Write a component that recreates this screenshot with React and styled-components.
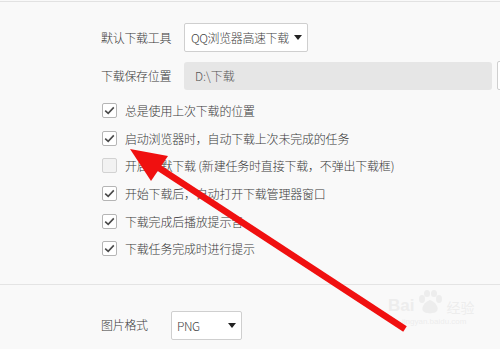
import React from 'react'
import styled, { createGlobalStyle } from 'styled-components'

const GlobalStyle = createGlobalStyle`
  html, body {
    margin: 0;
    padding: 0;
    background: #f9f9f9;
  }
  body {
    font-family: "Noto Sans CJK SC", "Microsoft YaHei", sans-serif;
    font-size: 12px;
    font-weight: 300;
    color: #333;
  }
`

const Page = styled.div`
  position: relative;
  width: 500px;
  height: 349px;
  overflow: hidden;
  border-top: 1px solid #e2e2e2;
  margin-top: 1px;
  box-sizing: border-box;
`

const Section = styled.div`
  padding: 21px 0 0 101px;
`

const FieldRow = styled.div`
  display: flex;
  align-items: center;
  height: 29px;
  margin-bottom: ${p => p.$gap || 0}px;
`

const Label = styled.span`
  width: ${p => p.$width}px;
  flex-shrink: 0;
  line-height: 1;
  color: #3a3a3a;
  letter-spacing: -0.3px;
`

const Select = styled.div`
  display: flex;
  align-items: center;
  justify-content: space-between;
  box-sizing: border-box;
  flex-shrink: 0;
  width: ${p => p.$width}px;
  height: 29px;
  padding: 0 5px 0 ${p => p.$pad}px;
  background: #fff;
  border: 1px solid #cfcfcf;
  border-radius: 2px;
  color: #444;
  letter-spacing: -0.4px;
`

const Caret = styled.span`
  width: 0;
  height: 0;
  border-left: 4px solid transparent;
  border-right: 4px solid transparent;
  border-top: 5px solid #222;
`

const PathInput = styled.div`
  display: flex;
  align-items: center;
  box-sizing: border-box;
  flex-shrink: 0;
  width: 308px;
  height: 28px;
  padding-left: 11px;
  background: #e6e6e6;
  border-radius: 3px;
  color: #555;
`

const ChangeBtn = styled.div`
  width: 40px;
  height: 29px;
  margin-left: 5px;
  box-sizing: border-box;
  border: 1px solid #cfcfcf;
  border-radius: 2px;
  background: #fff;
  flex-shrink: 0;
`

const CheckList = styled.div`
  display: flex;
  flex-direction: column;
  padding: 7px 0 0 1px;
`

const CheckRow = styled.div`
  display: flex;
  align-items: center;
  height: 27.6px;
  gap: 8px;
  color: #3a3a3a;
  letter-spacing: -0.2px;
  white-space: pre;
`

const Box = styled.span`
  display: flex;
  align-items: center;
  justify-content: center;
  flex-shrink: 0;
  width: 15px;
  height: 15px;
  box-sizing: border-box;
  border: 1px solid ${p => (p.$checked ? '#b5b5b5' : '#d2d2d2')};
  border-radius: 2px;
  background: ${p => (p.$checked ? '#fff' : '#f2f2f2')};
`

const Divider = styled.div`
  height: 1px;
  background: #e4e4e4;
  margin-top: 21px;
`

const BottomSection = styled.div`
  padding: 26px 0 0 101px;
`

const Overlay = styled.svg`
  position: absolute;
  left: 0;
  top: -2px;
  pointer-events: none;
`

const Watermark = styled.div`
  position: absolute;
  left: 388px;
  top: 288px;
  display: flex;
  flex-direction: column;
  align-items: flex-start;
  color: rgba(230, 230, 230, 0.65);
  pointer-events: none;
`

const MarkTitle = styled.div`
  display: flex;
  align-items: flex-end;
  gap: 3px;
  font-family: "Liberation Sans", Arial, sans-serif;
  font-weight: bold;
  font-size: 17px;
  line-height: 1;
  span.cn {
    font-family: "Noto Sans CJK SC", sans-serif;
    font-size: 14px;
    font-weight: normal;
  }
`

const MarkUrl = styled.div`
  font-family: "Liberation Sans", Arial, sans-serif;
  font-size: 8px;
  margin: 3px 0 0 14px;
`

const Check = () => (
  <svg width="11" height="9" viewBox="0 0 11 9">
    <path d="M1.2 4.6 L4.2 7.4 L9.8 1.4" fill="none" stroke="#4a4a4a" strokeWidth="1.6" />
  </svg>
)

const options = [
  { text: '总是使用上次下载的位置', checked: true },
  { text: '启动浏览器时，自动下载上次未完成的任务', checked: true },
  { text: '开启静默下载 (新建任务时直接下载，不弹出下载框)', checked: false },
  { text: '开始下载后，自动打开下载管理器窗口', checked: true },
  { text: '下载完成后播放提示音', checked: true },
  { text: '下载任务完成时进行提示', checked: true }
]

const paw = 'rgba(230,230,230,0.65)'

export default function App() {
  return (
    <>
      <GlobalStyle />
      <Page>
        <Section>
          <FieldRow $gap={9}>
            <Label $width={83}>默认下载工具</Label>
            <Select $width={124} $pad={6}>
              QQ浏览器高速下载
              <Caret />
            </Select>
          </FieldRow>
          <FieldRow>
            <Label $width={83}>下载保存位置</Label>
            <PathInput>D:\下载</PathInput>
            <ChangeBtn />
          </FieldRow>
          <CheckList>
            {options.map(o => (
              <CheckRow key={o.text}>
                <Box $checked={o.checked}>{o.checked && <Check />}</Box>
                {o.text}
              </CheckRow>
            ))}
          </CheckList>
        </Section>
        <Divider />
        <BottomSection>
          <FieldRow>
            <Label $width={70}>图片格式</Label>
            <Select $width={71} $pad={5}>
              PNG
              <Caret />
            </Select>
          </FieldRow>
        </BottomSection>

        <Watermark>
          <MarkTitle>
            Bai
            <svg width="26" height="24" viewBox="0 0 26 24">
              <ellipse cx="5" cy="9" rx="3" ry="4" fill={paw} />
              <ellipse cx="10" cy="3.5" rx="3" ry="3.5" fill={paw} />
              <ellipse cx="17" cy="3.5" rx="3" ry="3.5" fill={paw} />
              <ellipse cx="22" cy="9" rx="3" ry="4" fill={paw} />
              <path d="M13 10 C7 12 4 18 6 21 C8 24 18 24 20 21 C22 18 19 12 13 10 Z" fill={paw} />
            </svg>
            <span className="cn">经验</span>
          </MarkTitle>
          <MarkUrl>jingyan.baidu.com</MarkUrl>
        </Watermark>

        <Overlay width="500" height="351" viewBox="0 0 500 351">
          <line x1="156" y1="166" x2="405" y2="329" stroke="#f01010" strokeWidth="6.5" />
          <polygon points="130,149 168,156 151,181" fill="#f01010" />
        </Overlay>
      </Page>
    </>
  )
}
